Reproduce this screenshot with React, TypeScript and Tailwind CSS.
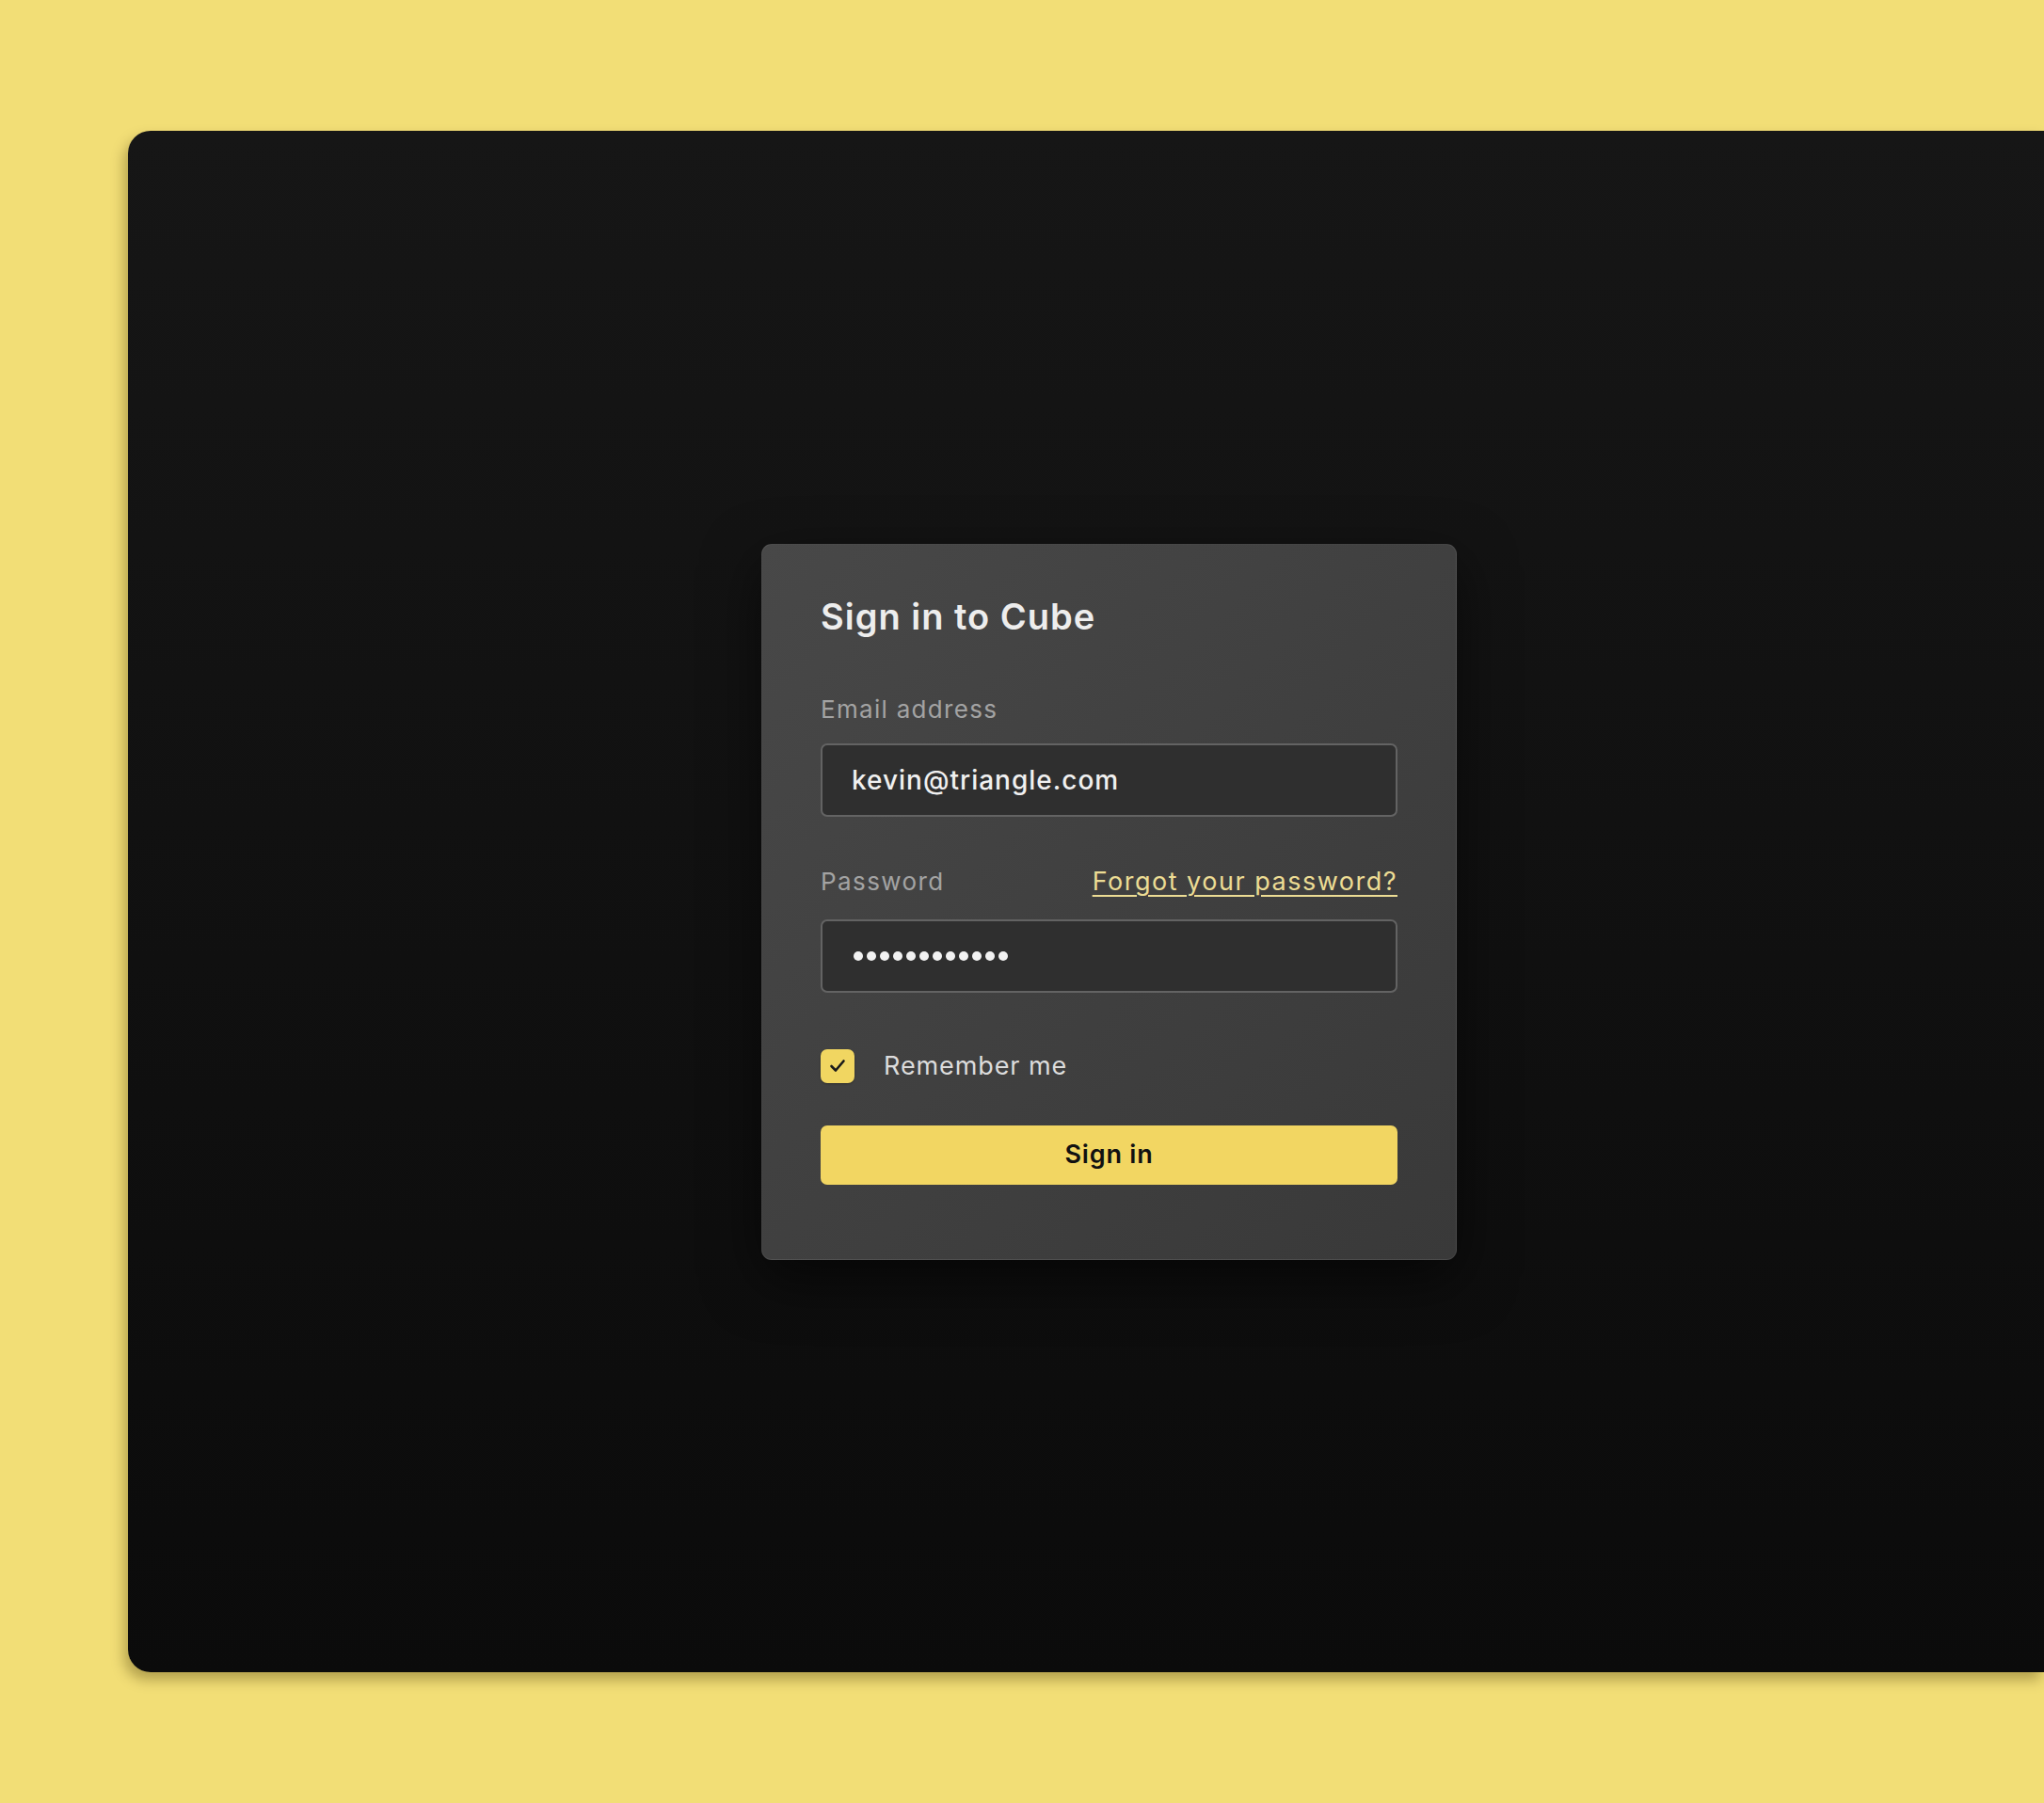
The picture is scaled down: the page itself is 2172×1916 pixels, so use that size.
import React from "react";

export default function App() {
  const font = { fontFamily: "Inter, 'Noto Sans', sans-serif" };
  return (
    <div
      className="w-full h-[1916px] bg-[#f2de76] pt-[139px] pl-[136px] overflow-hidden"
      style={font}
    >
      <div className="h-[1638px] w-[2036px] rounded-l-[24px] bg-gradient-to-b from-[#161616] to-[#0b0b0b] shadow-[-4px_8px_14px_rgba(60,45,0,0.35)] flex items-center pl-[673px]">
        <div className="w-[739px] h-[761px] rounded-[11px] bg-gradient-to-br from-[#484848] via-[#404040] to-[#393939] border border-white/[0.06] shadow-[0_20px_60px_rgba(0,0,0,0.55)] px-[62px] pt-[53px] flex flex-col">
          <h1 className="text-[38px] leading-[46px] font-semibold text-[#ededed] tracking-[1px]">
            Sign in to Cube
          </h1>

          <label className="mt-[60px] text-[26px] leading-[32px] text-[#a3a3a3] tracking-[1.3px]">
            Email address
          </label>
          <div className="mt-[20px] h-[78px] rounded-[7px] border-2 border-[#636363] bg-[#2f2f2f] flex items-center pl-[31px]">
            <span className="text-[28px] leading-[34px] text-[#f0f0f0] font-medium tracking-[1px]">
              kevin@triangle.com
            </span>
          </div>

          <div className="mt-[53px] flex items-baseline justify-between">
            <span className="text-[26px] leading-[32px] text-[#a3a3a3] tracking-[1.4px]">Password</span>
            <a className="text-[27px] leading-[32px] text-[#ecdc94] underline underline-offset-[5px] decoration-[2px] tracking-[1.5px]">
              Forgot your password?
            </a>
          </div>
          <div className="mt-[24px] h-[78px] rounded-[7px] border-2 border-[#636363] bg-[#2f2f2f] flex items-center pl-[33px] gap-[4px]">
            {Array.from({ length: 12 }).map((_, i) => (
              <span key={i} className="block w-[10px] h-[10px] rounded-full bg-[#f2f2f2]" />
            ))}
          </div>

          <div className="mt-[60px] flex items-center gap-[31px]">
            <div className="w-[36px] h-[36px] rounded-[7px] bg-[#f1d661] flex items-center justify-center shadow-[0_1px_2px_rgba(0,0,0,0.3)]">
              <svg width="18" height="15" viewBox="0 0 18 15" fill="none">
                <path d="M2.5 8 L7 12.5 L15.5 2.5" stroke="#1a1a1a" strokeWidth="2.6" strokeLinecap="round" strokeLinejoin="round" />
              </svg>
            </div>
            <span className="text-[27px] leading-[34px] text-[#dcdcdc] tracking-[0.9px]">Remember me</span>
          </div>

          <button className="mt-[45px] h-[63px] w-full rounded-[7px] bg-[#f2d662] text-[27px] font-semibold text-[#111111] tracking-[0.8px]">
            Sign in
          </button>
        </div>
      </div>
    </div>
  );
}
